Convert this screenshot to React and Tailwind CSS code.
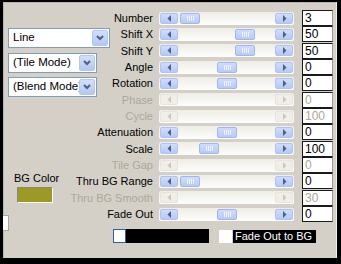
import React from 'react';

const rows = [
    { label: 'Number', value: '3', pos: 21 },
    { label: 'Shift X', value: '50', pos: 76 },
    { label: 'Shift Y', value: '50', pos: 76 },
    { label: 'Angle', value: '0', pos: 58 },
    { label: 'Rotation', value: '0', pos: 58 },
    { label: 'Phase', value: '0', off: true },
    { label: 'Cycle', value: '100', off: true },
    { label: 'Attenuation', value: '0', pos: 58 },
    { label: 'Scale', value: '100', pos: 40 },
    { label: 'Tile Gap', value: '0', off: true },
    { label: 'Thru BG Range', value: '0', pos: 21 },
    { label: 'Thru BG Smooth', value: '30', off: true },
    { label: 'Fade Out', value: '0', pos: 58 },
];

const Arrow = ({ dir, off }) => (
    <svg width="5" height="7" viewBox="0 0 5 7">
        <path d={dir === 'left' ? 'M4 0 L0.5 3.5 L4 7 Z' : 'M1 0 L4.5 3.5 L1 7 Z'} fill={off ? '#cbc8bb' : '#4d6185'} />
    </svg>
);

const ArrowBtn = ({ dir, off }) => (
    <div className={`w-[18px] h-[11px] rounded-[2px] border flex items-center justify-center ${off ? 'bg-[#efeee8] border-[#e6e4dc]' : 'bg-gradient-to-b from-[#d0dcfb] to-[#b6c9f7] border-[#aec2f3]'}`}>
        <Arrow dir={dir} off={off} />
    </div>
);

const Slider = ({ pos, off }) => (
    <div className="relative w-[135px] h-[13px] rounded-[2px] bg-gradient-to-b from-[#eeede6] to-[#fdfdfc] flex items-center justify-between px-px">
        <ArrowBtn dir="left" off={off} />
        {!off && (
            <div
                className="absolute top-[1px] w-[20px] h-[11px] rounded-[2px] border border-[#9fb6ef] bg-gradient-to-b from-[#d0dcfb] to-[#b8cbf7] flex items-center justify-center gap-px"
                style={{ left: pos }}
            >
                <span className="w-px h-[5px] bg-[#eef3fe]" />
                <span className="w-px h-[5px] bg-[#eef3fe]" />
                <span className="w-px h-[5px] bg-[#eef3fe]" />
                <span className="w-px h-[5px] bg-[#eef3fe]" />
            </div>
        )}
        <ArrowBtn dir="right" off={off} />
    </div>
);

const Dropdown = ({ text, width }) => (
    <div className={`${width} h-[20px] bg-white border border-[#7f9db9] flex items-center pl-[4px] pr-px`}>
        <span className="flex-1 min-w-0 overflow-hidden whitespace-nowrap text-black text-[11.5px]">{text}</span>
        <div className="shrink-0 w-[16px] h-[16px] rounded-[2px] border border-[#b4c7f3] bg-gradient-to-b from-[#d3defb] to-[#b4c7f6] flex items-center justify-center">
            <svg width="8" height="6" viewBox="0 0 8 6">
                <path d="M1 1 L4 4 L7 1" stroke="#4d6185" strokeWidth="2" fill="none" />
            </svg>
        </div>
    </div>
);

const App = () => {
    return (
        <div className="w-[341px] h-[264px] bg-black pt-[2px] pl-[3px] pr-[4px] pb-[6px] text-[11px]" style={{ fontFamily: '"Liberation Sans", Arial, sans-serif' }}>
            <div className="h-full bg-[#d4d0c8] border-l border-t border-[#bcb8b0] border-r-[#f2f1ed] border-r pt-[7px]">
                <div className="flex items-start h-[213px]">
                    {/* Left column: mode dropdowns and background color */}
                    <div className="w-[108px] shrink-0 pl-[4px] pt-[18px] flex flex-col">
                        <Dropdown text="Line" width="w-[102px]" />
                        <div className="mt-[5px]"><Dropdown text="(Tile Mode)" width="w-[89px]" /></div>
                        <div className="mt-[4px]"><Dropdown text="(Blend Mode)" width="w-[89px]" /></div>
                        <div className="mt-[75px] pl-[6px] leading-[13px] text-black">BG Color</div>
                        <div className="mt-[2px] ml-[9px] w-[36px] h-[16px] bg-[#9c9a24] border border-t-[#8a887c] border-l-[#8a887c] border-b-white border-r-white" />
                        <div className="mt-[12px] -ml-[5px] w-[6px] h-[16px] bg-white border-y border-r border-[#a9a69a]" />
                    </div>

                    {/* Slider rows */}
                    <div className="grid grid-rows-[repeat(13,16.33px)]">
                        {rows.map(r => (
                            <div key={r.label} className="flex items-center">
                                <div className={`w-[41px] flex justify-end whitespace-nowrap ${r.off ? 'text-[#aca899]' : 'text-black'}`}>
                                    {r.label}
                                </div>
                                <div className="ml-[6px]">
                                    <Slider pos={r.pos} off={r.off} />
                                </div>
                                <div className={`ml-[8px] w-[31px] h-[16px] bg-white border border-[#1a1a1a] border-r-[#9c9a90] pl-[2px] leading-[14px] text-[12px] ${r.off ? 'text-[#aca899]' : 'text-black'}`}>
                                    {r.value}
                                </div>
                            </div>
                        ))}
                    </div>
                </div>

                {/* Bottom: fade colour and checkbox */}
                <div className="flex items-center mt-[6px] pl-[109px]">
                    <div className="w-[96px] h-[14px] bg-black flex">
                        <div className="w-[13px] h-full bg-white border border-[#2c5ea8]" />
                    </div>
                    <div className="ml-[10px] w-[13px] h-[13px] bg-white" />
                    <div className="ml-px w-[83px] h-[13px] bg-black text-white leading-[13px] pl-[2px] whitespace-nowrap">
                        Fade Out to BG
                    </div>
                </div>
            </div>
        </div>
    );
};

export default App;
